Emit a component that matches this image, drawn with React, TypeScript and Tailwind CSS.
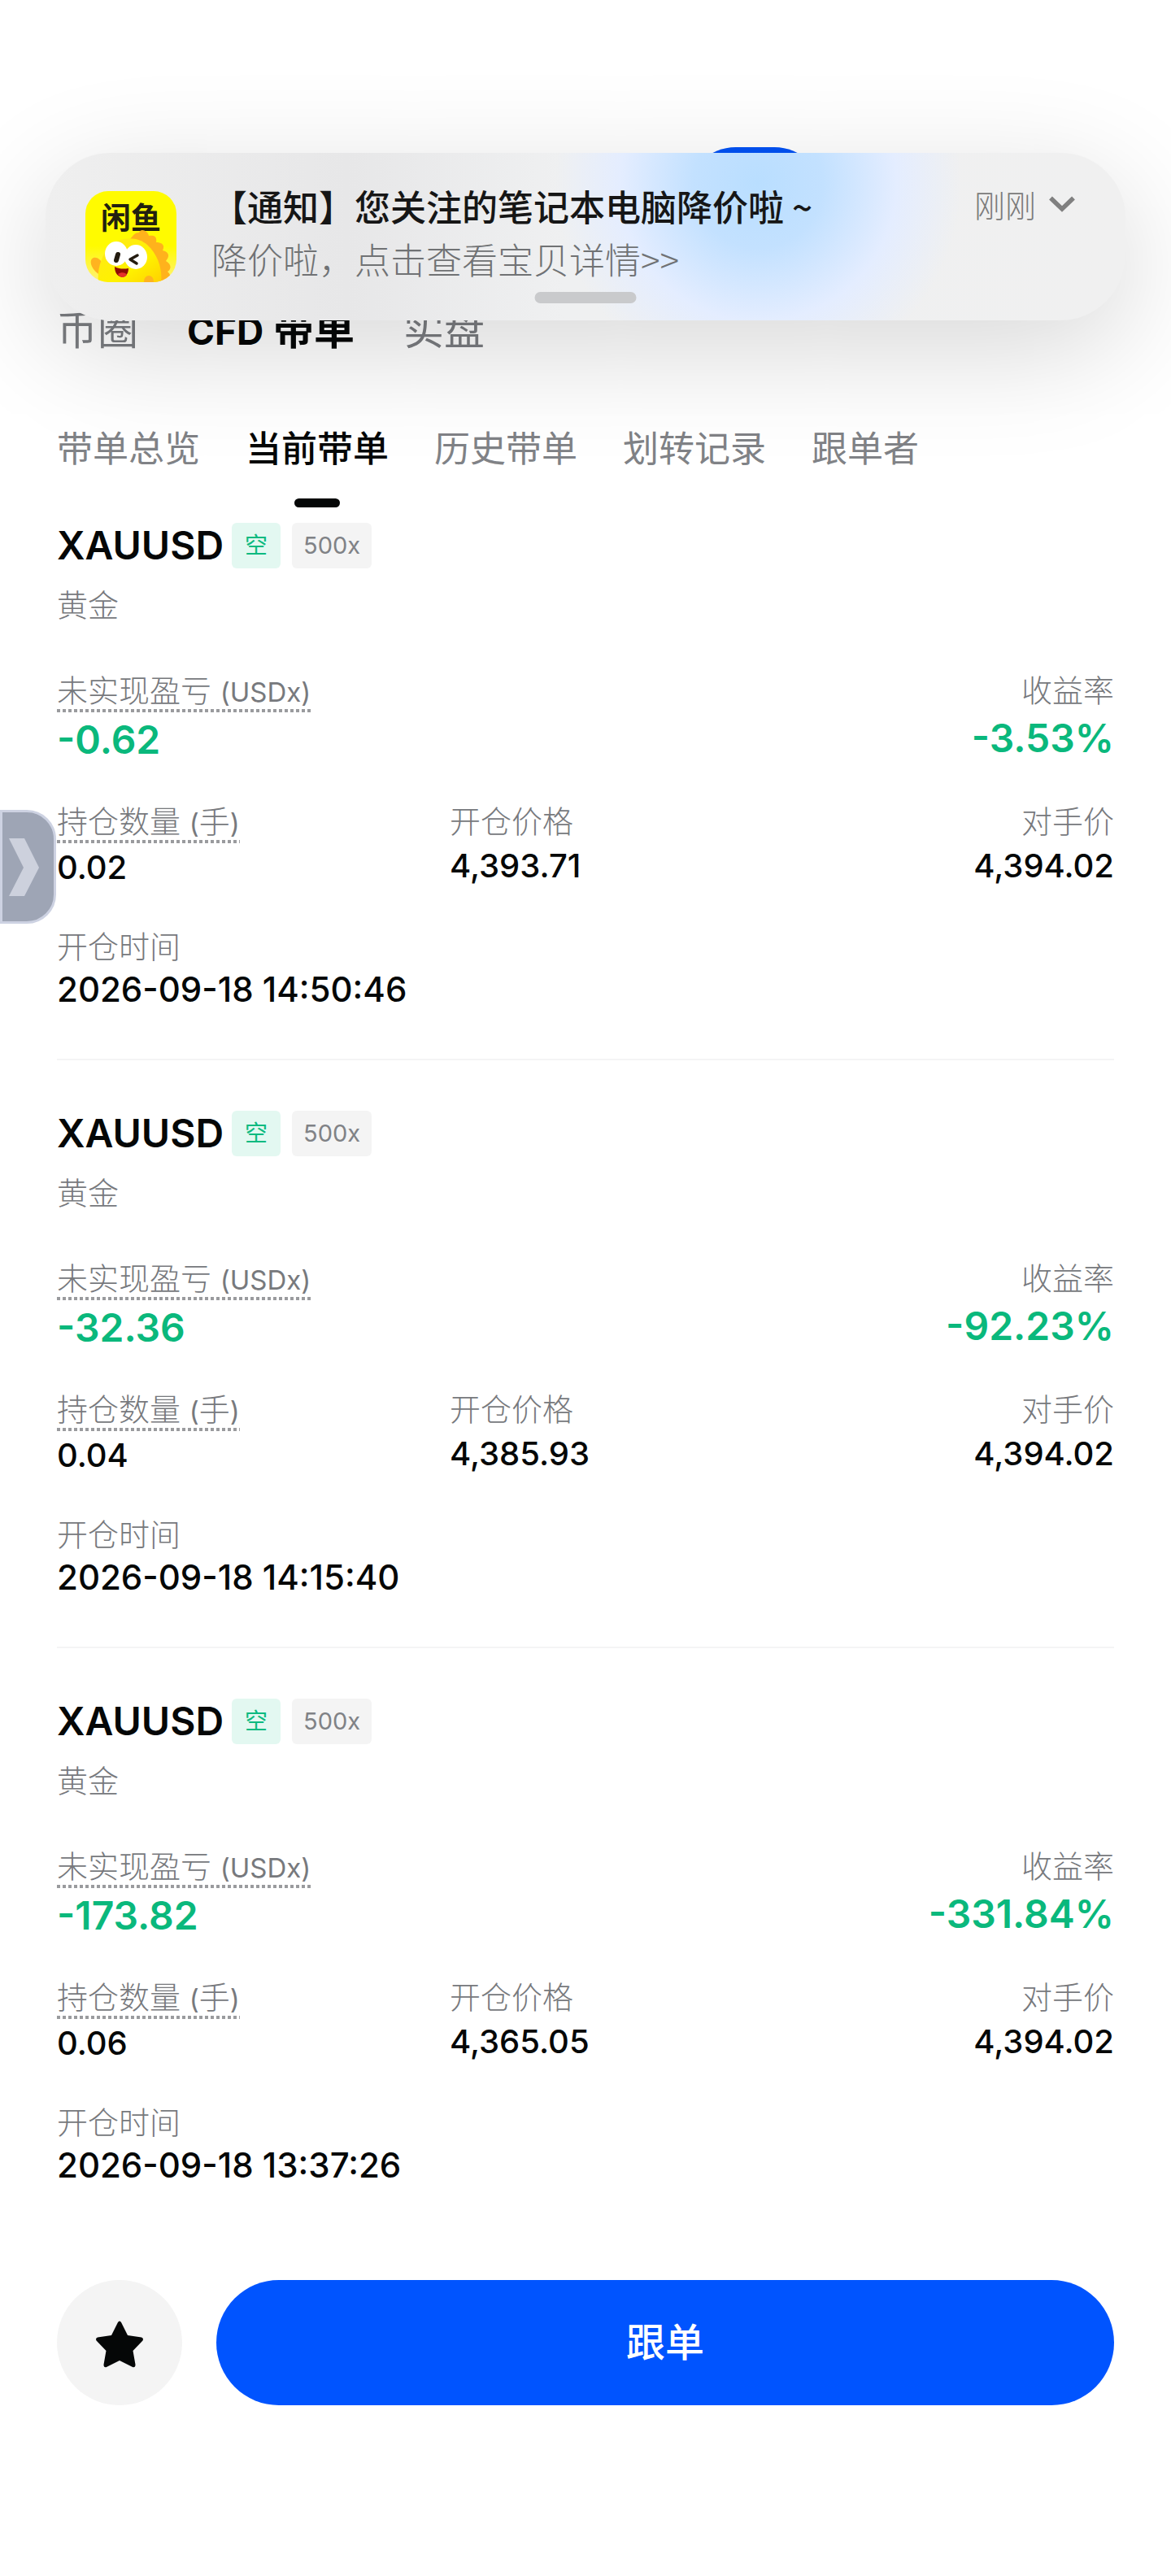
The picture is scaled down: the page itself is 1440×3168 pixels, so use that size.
import React from 'react';

type Position = {
  pnl: string;
  rate: string;
  size: string;
  open: string;
  time: string;
};

const positions: Position[] = [
  { pnl: '-0.62', rate: '-3.53%', size: '0.02', open: '4,393.71', time: '2026-09-18 14:50:46' },
  { pnl: '-32.36', rate: '-92.23%', size: '0.04', open: '4,385.93', time: '2026-09-18 14:15:40' },
  { pnl: '-173.82', rate: '-331.84%', size: '0.06', open: '4,365.05', time: '2026-09-18 13:37:26' },
];

const tabs = ['带单总览', '当前带单', '历史带单', '划转记录', '跟单者'];

function AppLogo() {
  return (
    <svg viewBox="0 0 112 112" className="size-28 shrink-0" aria-label="闲鱼" role="img">
      <defs>
        <linearGradient id="logoBg" x1="0" y1="0" x2="0" y2="1">
          <stop offset="0" stopColor="#fffb00" />
          <stop offset="0.6" stopColor="#fffb00" />
          <stop offset="1" stopColor="#fff27a" />
        </linearGradient>
        <linearGradient id="logoBody" x1="0" y1="0" x2="1" y2="1">
          <stop offset="0" stopColor="#ffe81a" />
          <stop offset="0.6" stopColor="#fff200" />
          <stop offset="1" stopColor="#ffd000" />
        </linearGradient>
        <clipPath id="logoClip">
          <rect width="112" height="112" rx="28" />
        </clipPath>
      </defs>
      <g clipPath="url(#logoClip)">
        <rect width="112" height="112" fill="url(#logoBg)" />
        <text
          x="56"
          y="47"
          textAnchor="middle"
          fontSize="37"
          fontWeight="700"
          fill="#22200f"
          fontFamily="'Noto Sans CJK SC', sans-serif"
        >
          闲鱼
        </text>
        <path
          d="M54 60 C58 56 60 51 66 51 C68 45 77 49 78 55 C86 54 88 57 87 63 C95 63 98 67 95 73 C103 75 104 80 99 86 C106 90 106 96 101 99 C107 104 104 112 98 113 L70 113 Z"
          fill="#ffb21c"
        />
        <path d="M18 103 C6 96 4 84 10 82 C15 81 18 84 22 90 Z" fill="#ffb31f" />
        <path
          d="M16 114 C14 96 20 78 30 68 C44 55 64 56 76 66 C90 79 95 97 93 114 Z"
          fill="url(#logoBody)"
        />
        <ellipse cx="62" cy="81" rx="14" ry="15" fill="#fff" />
        <ellipse cx="38" cy="77" rx="14" ry="15" fill="#fff" />
        <path d="M40 78 L38 85" stroke="#241c10" strokeWidth="6" strokeLinecap="round" />
        <path
          d="M64 79 L55 84 L63 89"
          fill="none"
          stroke="#241c10"
          strokeWidth="3.5"
          strokeLinecap="round"
          strokeLinejoin="round"
        />
        <path d="M36 93 C42 96 47 96 53 95 C53 110 36 109 36 93 Z" fill="#8f0d05" />
        <path d="M40 102 C44 99 50 100 51 103 C48 107 43 107 40 102 Z" fill="#e5322a" />
        <ellipse cx="78" cy="111" rx="6" ry="7" fill="#ffb31f" />
      </g>
    </svg>
  );
}

function Notification() {
  return (
    <div
      role="alert"
      className="absolute inset-x-14 top-[188px] h-[206px] rounded-[80px] bg-[#efefef] bg-[radial-gradient(circle_at_66%_18%,#b9deff_0,#c3e1ff_80px,#e4edff_170px,#eff0f200_250px),linear-gradient(90deg,#efefef,#e7e7e8_28%,#eff0f1_48%,#f0f0f0)] font-['Noto_Sans_CJK_SC',sans-serif] shadow-[0_36px_140px_rgba(0,0,0,0.16)]"
    >
      <div className="flex items-start gap-[43px] pt-[47px] pr-[62px] pl-[49px]">
        <AppLogo />
        <div className="-mt-3.5 flex-1 text-[44px] leading-[65px]">
          <p className="font-medium whitespace-pre text-[#161616]">【通知】您关注的笔记本电脑降价啦 ~</p>
          <p className="font-light text-[#707274]">降价啦，点击查看宝贝详情&gt;&gt;</p>
        </div>
        <button type="button" className="-mt-1 flex items-center gap-4 text-[38px] leading-[40px] font-light text-[#7b7b7b]">
          刚刚
          <svg viewBox="0 0 32 20" className="h-5 w-8" fill="none" stroke="#808080" strokeWidth="5.5" aria-hidden="true">
            <path d="M2 2.5 L16 16 L30 2.5" />
          </svg>
        </button>
      </div>
      <div className="absolute bottom-[21px] left-1/2 h-3.5 w-[125px] -translate-x-1/2 rounded-full bg-[#c9cacc]" />
    </div>
  );
}

function Label({ children, dotted = false }: { children: React.ReactNode; dotted?: boolean }) {
  return (
    <dt className="h-[50px] text-[38px] leading-[50px] font-light text-[#77797d]">
      {dotted ? (
        <span className="inline-block bg-[repeating-linear-gradient(90deg,#9a9b9e_0,#9a9b9e_4px,transparent_4px,transparent_7px)] bg-[length:100%_4px] bg-bottom bg-no-repeat pb-0.5 align-top">
          {children}
        </span>
      ) : (
        children
      )}
    </dt>
  );
}

function Latin({ children }: { children: React.ReactNode }) {
  return <span className="text-[33px] leading-none font-normal">{children}</span>;
}

function PositionCard({ item }: { item: Position }) {
  return (
    <article className="border-b-2 border-[#f4f4f5] pt-[62px] pb-[59px] first:pt-[19px] last:border-0 last:pb-0">
      <div className="flex h-14 items-center">
        <h2 className="text-[48px] leading-14 font-semibold">XAUUSD</h2>
        <span className="ml-2.5 flex h-14 w-[60px] items-center justify-center rounded-md bg-[#e3f8f1] text-[28px] text-[#0dba80]">
          空
        </span>
        <span className="ml-3.5 flex h-14 w-[98px] items-center justify-center rounded-md bg-[#f4f4f4] text-[29px] text-[#808286]">
          500x
        </span>
      </div>
      <p className="mt-5 text-[38px] leading-[50px] font-light text-[#77797d]">黄金</p>

      <dl className="mt-[55px] flex justify-between text-[48px] leading-[60px] font-semibold text-[#0ab87c]">
        <div>
          <Label dotted>
            未实现盈亏 <Latin>(USDx)</Latin>
          </Label>
          <dd className="mt-1.5">{item.pnl}</dd>
        </div>
        <div className="text-right">
          <Label>收益率</Label>
          <dd className="mt-1">{item.rate}</dd>
        </div>
      </dl>

      <dl className="mt-[45px] grid grid-cols-[483fr_417fr_400fr] text-[40px] leading-[52px] font-medium">
        <div>
          <Label dotted>
            持仓数量 <Latin>(</Latin>手<Latin>)</Latin>
          </Label>
          <dd className="mt-1.5">{item.size}</dd>
        </div>
        <div>
          <Label>开仓价格</Label>
          <dd className="mt-1">{item.open}</dd>
        </div>
        <div className="text-right">
          <Label>对手价</Label>
          <dd className="mt-1">4,394.02</dd>
        </div>
      </dl>

      <dl className="mt-[46px] text-[42px] leading-[52px] font-medium">
        <Label>开仓时间</Label>
        <dd className="mt-0.5">{item.time}</dd>
      </dl>
    </article>
  );
}

export default function App() {
  return (
    <div className="relative min-h-screen overflow-hidden bg-white pb-[210px] font-['Inter','Noto_Sans_CJK_SC',sans-serif] text-[#050707]">
      <header className="px-[70px] pt-[181px]">
        <div className="ml-[775px] h-[119px] w-[167px] rounded-full bg-[#0052f5]" />
        <nav aria-label="账户" className="mt-[76px] flex h-[60px] gap-[60px] text-[50px] leading-[60px] text-[#7b7d81]">
          <a href="#crypto">币圈</a>
          <a href="#cfd" aria-current="page" className="font-bold text-[#050707]">
            <span className="text-[46px] leading-none">CFD</span> 带单
          </a>
          <a href="#live">实盘</a>
        </nav>
        <nav aria-label="带单" className="mt-[86px] flex gap-14 text-[44px] leading-[60px] text-[#808286]">
          {tabs.map((t) =>
            t === '当前带单' ? (
              <a key={t} href="#current" aria-current="page" className="flex flex-col items-center font-medium text-[#050707]">
                {t}
                <span className="mt-[31px] h-[11px] w-14 rounded-full bg-[#050707]" />
              </a>
            ) : (
              <a key={t} href="#tab">
                {t}
              </a>
            ),
          )}
        </nav>
      </header>

      <main className="px-[70px]">
        {positions.map((p) => (
          <PositionCard key={p.time} item={p} />
        ))}
      </main>

      <footer className="mt-[115px] flex gap-[42px] px-[70px]">
        <button type="button" aria-label="收藏" className="flex size-[154px] shrink-0 items-center justify-center rounded-full bg-[#f4f4f4]">
          <svg viewBox="0 0 60 58" className="mt-1 h-[58px] w-[60px]" fill="#050707" aria-hidden="true">
            <path d="M28 2 Q30 -1 32 2 L40 18 L57 20.500 Q60 21.500 58.500 24.500 L46.500 37 L49.500 54 Q49.500 58 46 57 L30 49 L14 57 Q10.500 58 10.500 54 L13.500 37 L1.500 24.500 Q0 21.500 3 20.500 L20 18 Z" />
          </svg>
        </button>
        <button type="button" className="h-[154px] flex-1 rounded-full bg-[#0054ff] text-[48px] font-medium text-white">
          跟单
        </button>
      </footer>

      <button
        type="button"
        aria-label="展开侧栏"
        className="absolute top-[996px] left-0 flex h-[140px] w-[69px] items-center rounded-r-[36px] border-[3px] border-[#cdd2e2] bg-[#9ea5b5] pl-2"
      >
        <svg viewBox="0 0 37 71" className="h-[71px] w-[37px]" fill="#cdd1dd" aria-hidden="true">
          <path d="M0 0 H19 L37 36 L19 71 H0 L18 36 Z" />
        </svg>
      </button>

      <Notification />
    </div>
  );
}
